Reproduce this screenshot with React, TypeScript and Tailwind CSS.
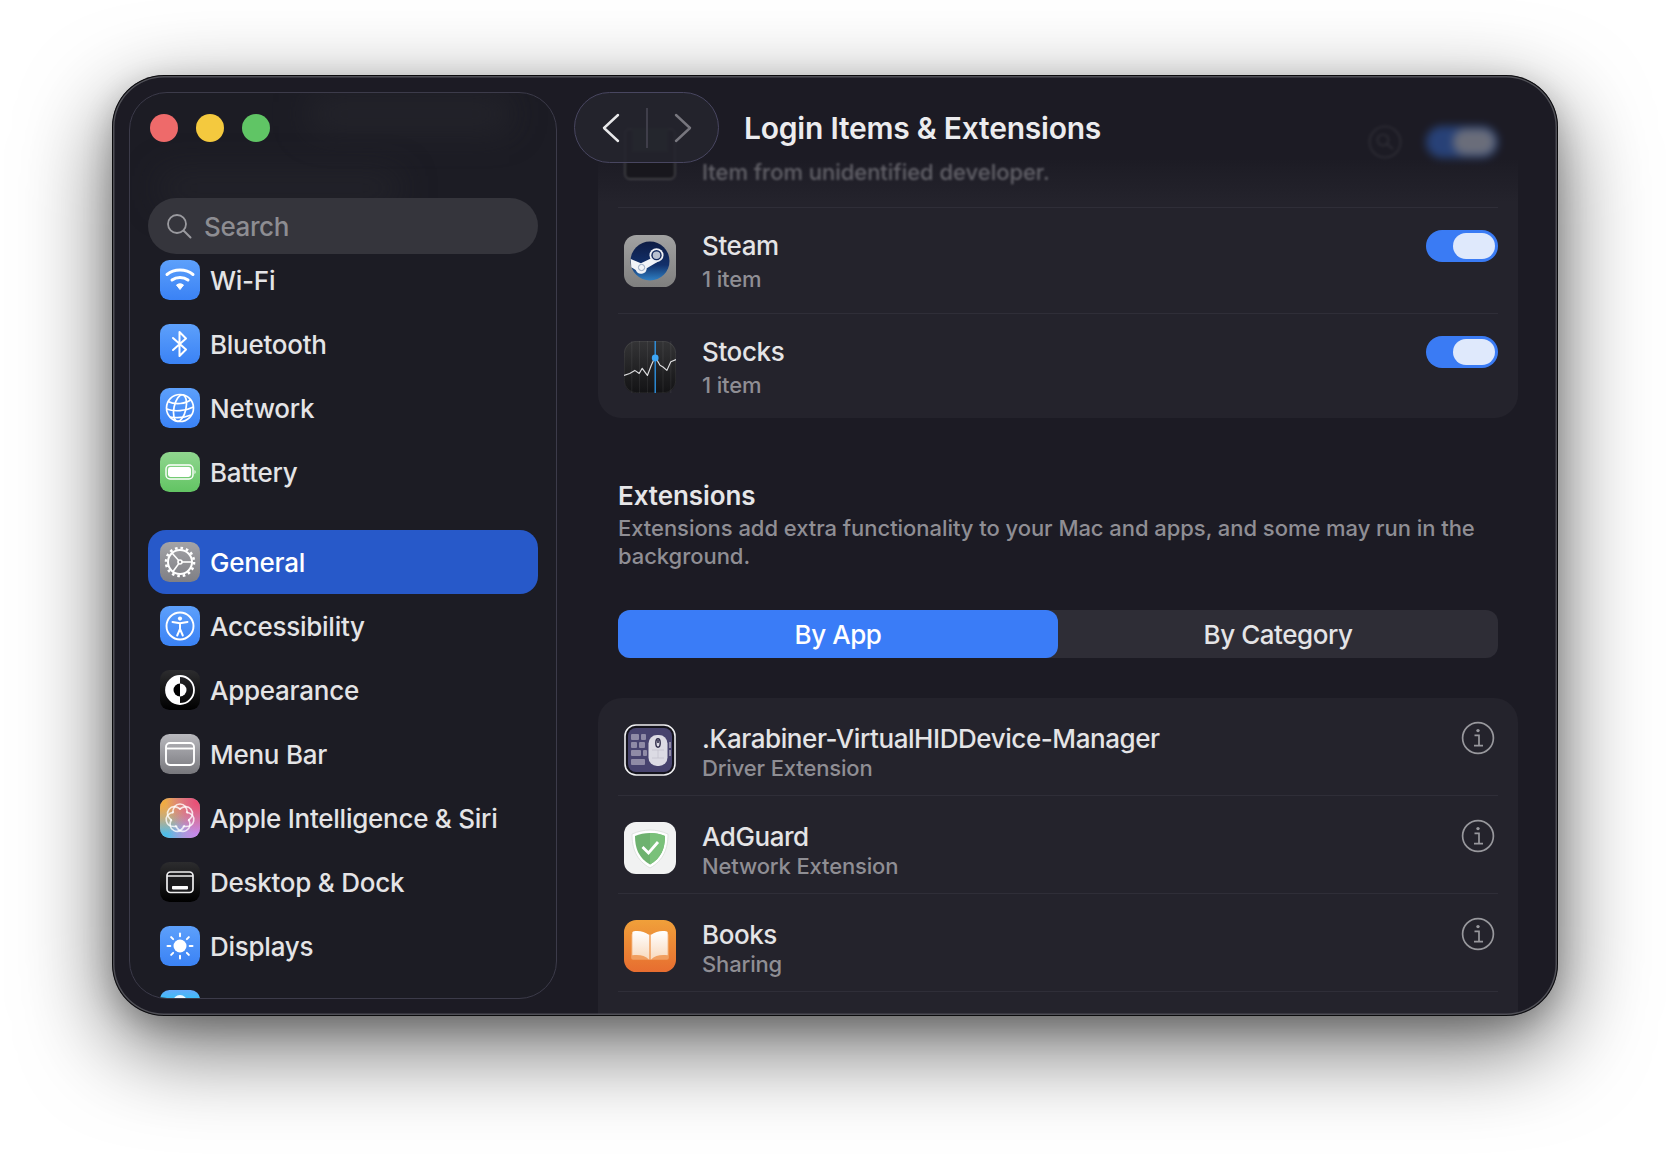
import React from "react";

const Tile = ({ id, from, to, children, size = 40, rx = 9.5 }: { id: string; from: string; to: string; children?: React.ReactNode; size?: number; rx?: number }) => (
  <svg width={size} height={size} viewBox="0 0 40 40" className="shrink-0 block">
    <defs>
      <linearGradient id={id} x1="0" y1="0" x2="0" y2="1">
        <stop offset="0" stopColor={from} />
        <stop offset="1" stopColor={to} />
      </linearGradient>
    </defs>
    <rect width="40" height="40" rx={rx} fill={`url(#${id})`} />
    {children}
  </svg>
);

const BLUE_A = "#5da0fb";
const BLUE_B = "#3a82f5";

const WifiIcon = () => (
  <Tile id="g-wifi" from={BLUE_A} to={BLUE_B}>
    <g fill="none" stroke="#fff" strokeWidth="3" strokeLinecap="round">
      <path d="M7 14.5 C14 8.5 26 8.5 33 14.5" />
      <path d="M12 20 C16.5 16.5 23.5 16.5 28 20" />
    </g>
    <path d="M16.5 25 C18.5 23.4 21.5 23.4 23.5 25 L20 29.5 Z" fill="#fff" stroke="#fff" strokeWidth="1" strokeLinejoin="round" />
  </Tile>
);
const BluetoothIcon = () => (
  <Tile id="g-bt" from={BLUE_A} to={BLUE_B}>
    <path d="M13 14 L26 25.5 L19.5 32 V8 L26 14.5 L13 26" fill="none" stroke="#fff" strokeWidth="2" strokeLinejoin="round" strokeLinecap="round" />
  </Tile>
);
const GlobeIcon = () => (
  <Tile id="g-net" from={BLUE_A} to={BLUE_B}>
    <g fill="none" stroke="#fff" strokeWidth="1.7">
      <circle cx="20" cy="20" r="13.5" />
      <ellipse cx="20" cy="20" rx="6" ry="13.5" transform="rotate(12 20 20)" />
      <path d="M8 13.5 C15 17 26 16 31 11.5" />
      <path d="M6.7 21 C14 24 26 23 33.4 19" />
      <path d="M10 29 C16 30 24 30 31 27" />
    </g>
  </Tile>
);
const BatteryIcon = () => (
  <Tile id="g-bat" from="#90d68f" to="#62c463">
    <rect x="6" y="13" width="27" height="14" rx="4" fill="none" stroke="#fff" strokeWidth="1.4" />
    <rect x="8" y="15" width="23" height="10" rx="2.4" fill="#fff" />
    <path d="M34.5 18 C36 18.6 36 21.4 34.5 22 Z" fill="#fff" />
  </Tile>
);
const GearIcon = () => (
  <Tile id="g-gen" from="#a3a3a7" to="#7f7f84">
    <g fill="none" stroke="#fff">
      <circle cx="20" cy="20" r="12" strokeWidth="2" />
      <circle cx="20" cy="20" r="14" strokeWidth="2.6" strokeDasharray="2.6 2.9" />
      <g strokeWidth="1.6">
        <circle cx="20" cy="20" r="2" />
        <path d="M22 20 H31" />
        <path d="M18.7 18.5 L12 11" />
        <path d="M18.8 21.6 L13 29.5" />
      </g>
    </g>
  </Tile>
);
const AccessIcon = () => (
  <Tile id="g-acc" from={BLUE_A} to={BLUE_B}>
    <circle cx="20" cy="20" r="13.5" fill="none" stroke="#fff" strokeWidth="1.9" />
    <circle cx="20" cy="12.6" r="2.1" fill="#fff" />
    <path d="M12.5 16 L20 17.3 L27.5 16 M20 17.3 V23 M20 23 L17.2 29.5 M20 23 L22.8 29.5" fill="none" stroke="#fff" strokeWidth="2" strokeLinecap="round" strokeLinejoin="round" />
  </Tile>
);
const AppearanceIcon = () => (
  <Tile id="g-app" from="#2c2c2e" to="#000">
    <circle cx="20" cy="20" r="14" fill="none" stroke="#fff" strokeWidth="1.8" />
    <path d="M20 6 A14 14 0 0 0 20 34 Z" fill="#fff" />
    <path d="M20 13.5 A6.5 6.5 0 0 0 20 26.5 Z" fill="#000" />
    <path d="M20 13.5 A6.5 6.5 0 0 1 20 26.5 Z" fill="#fff" />
  </Tile>
);
const MenuBarIcon = () => (
  <Tile id="g-menu" from="#b9b9be" to="#77777c">
    <rect x="6" y="9" width="28" height="22" rx="4" fill="none" stroke="#fff" strokeWidth="1.9" />
    <path d="M6 14.5 H34" stroke="#fff" strokeWidth="1.9" />
  </Tile>
);
const SiriIcon = () => (
  <svg width="40" height="40" viewBox="0 0 40 40" className="shrink-0 block">
    <defs>
      <radialGradient id="ai-o" cx="0.05" cy="0.1" r="0.8"><stop offset="0" stopColor="#f4ab3a" /><stop offset="1" stopColor="#f4ab3a" stopOpacity="0" /></radialGradient>
      <radialGradient id="ai-p" cx="0.95" cy="0.1" r="0.8"><stop offset="0" stopColor="#ee4a72" /><stop offset="1" stopColor="#ee4a72" stopOpacity="0" /></radialGradient>
      <radialGradient id="ai-b" cx="0.1" cy="1" r="0.8"><stop offset="0" stopColor="#40c0f0" /><stop offset="1" stopColor="#40c0f0" stopOpacity="0" /></radialGradient>
      <radialGradient id="ai-v" cx="1" cy="0.95" r="0.8"><stop offset="0" stopColor="#c784f5" /><stop offset="1" stopColor="#c784f5" stopOpacity="0" /></radialGradient>
    </defs>
    <rect width="40" height="40" rx="9.5" fill="#b9a5b0" />
    <rect width="40" height="40" rx="9.5" fill="url(#ai-b)" />
    <rect width="40" height="40" rx="9.5" fill="url(#ai-v)" />
    <rect width="40" height="40" rx="9.5" fill="url(#ai-o)" />
    <rect width="40" height="40" rx="9.5" fill="url(#ai-p)" />
    <g fill="none" stroke="#fff" strokeOpacity="0.78" strokeWidth="1.6">
      {[0, 51.4, 102.8, 154.2, 205.6, 257, 308.4].map((a) => (
        <path key={a} d="M12.6 15.5 C13 9.5 15.5 6 20 6 C24.5 6 27 9.5 27.4 15.5" transform={`rotate(${a} 20 20)`} />
      ))}
    </g>
  </svg>
);
const DesktopIcon = () => (
  <Tile id="g-desk" from="#2c2c2e" to="#000">
    <rect x="7" y="10" width="26" height="20.5" rx="3.5" fill="#1c1c1e" stroke="#f0f0f0" strokeWidth="1.7" />
    <path d="M7 14 H33" stroke="#f0f0f0" strokeWidth="1.4" />
    <rect x="12" y="24" width="16" height="3.4" rx="0.8" fill="#fff" />
  </Tile>
);
const DisplaysIcon = () => (
  <Tile id="g-disp" from={BLUE_A} to={BLUE_B}>
    <circle cx="20" cy="20" r="6.5" fill="#fff" />
    <g stroke="#fff" strokeWidth="2" strokeLinecap="round">
      {[0, 45, 90, 135, 180, 225, 270, 315].map((a) => (
        <path key={a} d="M20 7.5 V10.3" transform={`rotate(${a} 20 20)`} />
      ))}
    </g>
  </Tile>
);
const NextIcon = () => (
  <svg width="40" height="40" viewBox="0 0 40 40" className="shrink-0 block">
    <defs>
      <linearGradient id="g-next" x1="0" y1="0" x2="0" y2="1">
        <stop offset="0" stopColor="#62a8fb" />
        <stop offset="0.3" stopColor="#2fc6f5" />
      </linearGradient>
    </defs>
    <rect width="40" height="40" rx="9.5" fill="url(#g-next)" />
    <circle cx="20" cy="12" r="7" fill="#fff" fillOpacity="0.9" />
  </svg>
);

const SteamIcon = () => (
  <Tile id="g-steam" from="#a2a2a2" to="#7f7f7f" size={52} rx={9.5}>
    <defs>
      <linearGradient id="g-steam-c" x1="0" y1="0" x2="0" y2="1">
        <stop offset="0" stopColor="#0e1c44" />
        <stop offset="0.6" stopColor="#12306a" />
        <stop offset="1" stopColor="#2f80c4" />
      </linearGradient>
    </defs>
    <circle cx="20" cy="20" r="15" fill="url(#g-steam-c)" />
    <path d="M5.2 18.5 L13 21.8 L23 17 L26 20.5 L17.5 25.5 A4.4 4.4 0 0 1 9 27 L5.6 24.8 Z" fill="#f2f4f8" />
    <circle cx="25" cy="15.5" r="5.4" fill="#eef0f4" />
    <circle cx="25" cy="15.5" r="4" fill="#12285c" />
    <circle cx="25" cy="15.5" r="2.9" fill="#b9c1d0" />
    <circle cx="13.5" cy="25" r="2.4" fill="none" stroke="#8da0bc" strokeWidth="0.7" />
  </Tile>
);
const StocksIcon = () => (
  <Tile id="g-stocks" from="#343436" to="#131315" size={52} rx={9.5}>
    <rect x="0.2" y="0.2" width="39.6" height="39.6" rx="9.4" fill="none" stroke="#fff" strokeOpacity="0.15" strokeWidth="0.4" />
    <g stroke="#fff" strokeOpacity="0.16" strokeWidth="0.35">
      <path d="M6 0 V40 M12 0 V40 M18 0 V40 M30 0 V40 M36 0 V40" />
    </g>
    <path d="M0 26.5 L4.4 25 L8.3 22.6 L11.7 25 L14 21 L18 26.5 L21 18.7 L24 12.2 L27.7 18.7 L30 20 L33 22.6 L36 16 L40 14.3" fill="none" stroke="#dcdcde" strokeWidth="0.9" strokeLinejoin="round" />
    <path d="M24 0 V40" stroke="#2f9bf0" strokeWidth="1" />
    <circle cx="24" cy="13" r="2.6" fill="#3ea6f5" />
  </Tile>
);
const KarabinerIcon = () => (
  <svg width="52" height="52" viewBox="0 0 52 52" className="shrink-0 block">
    <rect x="1" y="1" width="50" height="50" rx="11" fill="#14131c" stroke="#eeeef0" strokeWidth="1.6" />
    <rect x="4" y="4" width="44" height="44" rx="8" fill="#47436e" />
    <g fill="#8f8ba6">
      <rect x="7" y="10" width="8" height="6" rx="1" /><rect x="17" y="10" width="5" height="6" rx="1" />
      <rect x="7" y="18" width="6" height="6" rx="1" /><rect x="15" y="18" width="6" height="6" rx="1" />
      <rect x="7" y="26" width="10" height="6" rx="1" /><rect x="19" y="26" width="4" height="6" rx="1" />
      <rect x="7" y="35" width="14" height="6" rx="1" /><rect x="45" y="18" width="2" height="6" /><rect x="45" y="26" width="2" height="6" />
    </g>
    <rect x="24.5" y="11" width="19" height="31" rx="8.5" fill="#dcdbe4" />
    <path d="M28 26 H40 M34 26 V34 M28 34 H40" stroke="#c3c2cd" strokeWidth="0.8" />
    <ellipse cx="34" cy="19" rx="2.2" ry="4.2" fill="none" stroke="#2d2a48" strokeWidth="1.4" />
    <path d="M34 16 V19" stroke="#2d2a48" strokeWidth="1.6" />
  </svg>
);
const AdGuardIcon = () => (
  <svg width="52" height="52" viewBox="0 0 52 52" className="shrink-0 block">
    <rect width="52" height="52" rx="12" fill="#f1f2f2" />
    <path d="M26 8 C32 8 38 9.5 44 12 C44 26 40 38 26 46 C12 38 8 26 8 12 C14 9.5 20 8 26 8 Z" fill="#ffffff" stroke="#d9dedb" strokeWidth="0.8" />
    <path d="M26 11 C31.5 11 36.5 12.2 41 14 C41 27 37 36 26 42.5 C15 36 11 27 11 14 C15.5 12.2 20.5 11 26 11 Z" fill="#6eb26f" />
    <path d="M26 11 C31.5 11 36.5 12.2 41 14 C41 27 37 36 26 42.5 Z" fill="#7ac17a" />
    <path d="M18.5 25 L24.5 31 L34 20" fill="none" stroke="#fff" strokeWidth="2.8" />
  </svg>
);
const BooksIcon = () => (
  <Tile id="g-books" from="#f0a03a" to="#e76d30" size={52} rx={9.5}>
    <defs>
      <linearGradient id="g-page" x1="0" y1="0" x2="0" y2="1">
        <stop offset="0" stopColor="#ffffff" />
        <stop offset="1" stopColor="#f8d9bd" />
      </linearGradient>
    </defs>
    <path d="M5.5 11 V29 A1.5 1.5 0 0 0 7 30.5 H33 A1.5 1.5 0 0 0 34.5 29 V11 Z" fill="#f3ae74" fillOpacity="0.7" />
    <path d="M19.4 11.5 C15.5 8.6 11 8 7 8.8 A1 1 0 0 0 6.4 9.8 V27.2 C11 26.4 16 27 19.4 30.5 Z" fill="url(#g-page)" />
    <path d="M20.6 11.5 C24.5 8.6 29 8 33 8.8 A1 1 0 0 1 33.6 9.8 V27.2 C29 26.4 24 27 20.6 30.5 Z" fill="url(#g-page)" />
  </Tile>
);

const BlurredIcon = () => (
  <svg width="52" height="52" viewBox="0 0 52 52" className="shrink-0 block">
    <rect x="1" y="1" width="50" height="50" rx="5" fill="#17161b" stroke="#48484c" strokeWidth="1.8" />
    <rect x="8" y="0" width="36" height="24" fill="#28352c" />
  </svg>
);

const ChevronLeft = ({ color }: { color: string }) => (
  <svg width="18" height="30" viewBox="0 0 18 30" className="block">
    <path d="M16 2 L2 15 L16 28" fill="none" stroke={color} strokeWidth="2.4" strokeLinecap="round" strokeLinejoin="round" />
  </svg>
);
const ChevronRight = ({ color }: { color: string }) => (
  <svg width="18" height="30" viewBox="0 0 18 30" className="block">
    <path d="M2 2 L16 15 L2 28" fill="none" stroke={color} strokeWidth="2.4" strokeLinecap="round" strokeLinejoin="round" />
  </svg>
);

const InfoIcon = () => (
  <svg width="34" height="34" viewBox="0 0 34 34" className="block">
    <circle cx="17" cy="17" r="15.4" fill="none" stroke="#98989d" strokeWidth="1.7" />
    <circle cx="17" cy="9.6" r="1.7" fill="#98989d" />
    <path d="M13.5 14.4 H18 V24.6 M13 24.6 H22" fill="none" stroke="#98989d" strokeWidth="1.7" />
  </svg>
);

const Toggle = () => (
  <div className="w-[72px] h-[32px] rounded-full bg-[#3a7bf4] flex items-center justify-end pr-[3px] shrink-0">
    <div className="w-[42px] h-[26px] rounded-full bg-[#dfe9fc]" />
  </div>
);

type Item = { name: string; icon: React.ReactNode; selected?: boolean };

const groupA: Item[] = [
  { name: "Wi-Fi", icon: <WifiIcon /> },
  { name: "Bluetooth", icon: <BluetoothIcon /> },
  { name: "Network", icon: <GlobeIcon /> },
  { name: "Battery", icon: <BatteryIcon /> },
];
const groupB: Item[] = [
  { name: "General", icon: <GearIcon />, selected: true },
  { name: "Accessibility", icon: <AccessIcon /> },
  { name: "Appearance", icon: <AppearanceIcon /> },
  { name: "Menu Bar", icon: <MenuBarIcon /> },
  { name: "Apple Intelligence & Siri", icon: <SiriIcon /> },
  { name: "Desktop & Dock", icon: <DesktopIcon /> },
  { name: "Displays", icon: <DisplaysIcon /> },
  { name: "", icon: <NextIcon /> },
];

const SideRow = ({ item }: { item: Item }) => (
  <div className={`h-[64px] px-[12px] flex items-center gap-[10px] rounded-[18px] ${item.selected ? "bg-[#2759c9] text-white" : "text-[#e4e4e6]"}`}>
    {item.icon}
    <span className="text-[26px] leading-[32px] tracking-[-0.26px] font-[450] pt-[1px]">{item.name}</span>
  </div>
);

const LoginRow = ({ name, sub, icon }: { name: string; sub: string; icon: React.ReactNode }) => (
  <div className="h-[106.5px] border-b-[1.5px] border-[#2f2e38] flex items-start last:border-b-0">
    <div className="pl-[6px] pt-[27px] pr-[26px]">{icon}</div>
    <div className="flex-1 pt-[22px]">
      <div className="text-[26px] leading-[32px] text-[#e4e4e6] tracking-[-0.4px] font-[450]">{name}</div>
      <div className="text-[22px] leading-[28px] mt-[3px] text-[#8f8e94] tracking-[-0.15px] font-[450]">{sub}</div>
    </div>
    <div className="pt-[22px]"><Toggle /></div>
  </div>
);

const ExtRow = ({ name, sub, icon }: { name: string; sub: string; icon: React.ReactNode }) => (
  <div className="h-[98px] border-b-[1.5px] border-[#2f2e38] flex items-start">
    <div className="pl-[6px] pt-[26px] pr-[26px]">{icon}</div>
    <div className="flex-1 pt-[25px]">
      <div className="text-[26px] leading-[32px] text-[#e4e4e6] tracking-[-0.43px] font-[450]">{name}</div>
      <div className="text-[22px] leading-[28px] -mt-[1px] text-[#8f8e94] tracking-[-0.15px] font-[450]">{sub}</div>
    </div>
    <div className="pt-[23px] pr-[3px]"><InfoIcon /></div>
  </div>
);

export default function App() {
  return (
    <div className="h-[1164px] w-[1670px] bg-white overflow-hidden pl-[112px] pt-[75px] font-['Inter','Liberation_Sans',sans-serif]">
      <div className="relative w-[1446px] h-[941px] rounded-[52px] bg-[#1c1b24] flex overflow-hidden p-[17px] shadow-[0_30px_90px_rgba(0,0,0,0.6),0_10px_30px_rgba(0,0,0,0.2)]">
        <aside className="relative w-[428px] rounded-[38px] border-[1.5px] border-[#3c3b4a] bg-[#1c1c24] overflow-hidden px-[18px] pt-[105px] shrink-0">
          <div className="absolute left-[30px] top-[80px] w-[240px] h-[30px] bg-[#2c2c32] blur-[18px] opacity-50" />
          <div className="absolute left-[180px] top-[6px] w-[200px] h-[30px] bg-[#2c2c32] blur-[18px] opacity-60" />
          <div className="relative h-[56px] rounded-full bg-[#35353c] flex items-center pl-[18px] gap-[12px] text-[#8d8d92]">
            <svg width="26" height="26" viewBox="0 0 26 26" className="block">
              <circle cx="11" cy="11" r="9" fill="none" stroke="#9a9a9f" strokeWidth="1.8" />
              <path d="M17.5 17.5 L24.5 24.5" stroke="#9a9a9f" strokeWidth="2" strokeLinecap="round" />
            </svg>
            <span className="text-[26px] leading-[32px] tracking-[-0.4px] font-[450] pt-[1px]">Search</span>
          </div>
          <div className="relative -mt-[6px]">
            {groupA.map((i) => <SideRow key={i.name} item={i} />)}
            <div className="h-[26px]" />
            {groupB.map((i) => <SideRow key={i.name || "next"} item={i} />)}
          </div>
        </aside>

        <main className="flex-1 -mt-[17px] pl-[41px] pr-[23px] pt-[26px]">
          <section className="h-[317px] rounded-[24px] px-[20px] bg-[linear-gradient(to_bottom,#1c1b24_18%,#24232c_32%)]">
            <div className="h-[106.5px] border-b-[1.5px] border-[#2f2e38] flex items-start">
              <div className="pl-[6px] pt-[27px] pr-[26px] blur-[1px] opacity-80"><BlurredIcon /></div>
              <div className="flex-1 pt-[22px]">
                <div className="h-[32px]" />
                <div className="text-[22px] leading-[28px] mt-[3px] text-[#8f8e94] tracking-[-0.03px] font-[450] blur-[1px] opacity-60">Item from unidentified developer.</div>
              </div>
              <div className="pt-[24px] pr-[24px] blur-[1.5px] opacity-15">
                <svg width="34" height="34" viewBox="0 0 34 34" className="block">
                  <circle cx="17" cy="17" r="15.5" fill="none" stroke="#98989d" strokeWidth="1.7" />
                  <circle cx="15" cy="15" r="5.5" fill="none" stroke="#98989d" strokeWidth="1.7" />
                  <path d="M19 19 L25 24" stroke="#98989d" strokeWidth="1.7" />
                </svg>
              </div>
              <div className="pt-[25px] blur-[4px] opacity-40"><Toggle /></div>
            </div>
            <LoginRow name="Steam" sub="1 item" icon={<SteamIcon />} />
            <LoginRow name="Stocks" sub="1 item" icon={<StocksIcon />} />
          </section>

          <section className="px-[20px]">
            <h2 className="mt-[62px] text-[26px] leading-[32px] font-semibold text-[#e6e6e8] tracking-[-0.08px]">Extensions</h2>
            <p className="mt-[2px] text-[22px] leading-[28px] text-[#8f8e94] tracking-[-0.05px] font-[450]">
              Extensions add extra functionality to your Mac and apps, and some may run in the background.
            </p>
            <div className="mt-[40px] h-[48px] rounded-[12px] bg-[#2e2d36] flex text-[26px] tracking-[-0.45px] font-[450]">
              <div className="w-1/2 rounded-[12px] bg-[#3a7cf7] text-white flex items-center justify-center">By App</div>
              <div className="w-1/2 text-[#e4e4e6] flex items-center justify-center">By Category</div>
            </div>
          </section>

          <section className="mt-[40px] rounded-t-[24px] px-[20px] bg-[#24232c] h-[330px]">
            <ExtRow name=".Karabiner-VirtualHIDDevice-Manager" sub="Driver Extension" icon={<KarabinerIcon />} />
            <ExtRow name="AdGuard" sub="Network Extension" icon={<AdGuardIcon />} />
            <ExtRow name="Books" sub="Sharing" icon={<BooksIcon />} />
          </section>
        </main>

        <div className="absolute left-[38px] top-[39px] flex gap-[18px]">
          <div className="w-[28px] h-[28px] rounded-full bg-[#ee6a6a]" />
          <div className="w-[28px] h-[28px] rounded-full bg-[#f4c93e]" />
          <div className="w-[28px] h-[28px] rounded-full bg-[#60c565]" />
        </div>

        <div className="absolute left-[462px] top-[17px] flex items-center gap-[25px]">
          <div className="w-[145px] h-[71px] rounded-full bg-[#25242e]/85 border-[1.5px] border-[#484660] flex items-center">
            <div className="w-[71px] flex justify-center pl-[1px]"><ChevronLeft color="#e8e8ea" /></div>
            <div className="w-[2px] h-[40px] bg-[#3f3e4a]" />
            <div className="flex-1 flex justify-center pr-[1px]"><ChevronRight color="#77767e" /></div>
          </div>
          <h1 className="text-[30px] leading-[36px] font-semibold text-[#ececee] tracking-[-0.23px]">Login Items &amp; Extensions</h1>
        </div>

        <div className="absolute inset-0 rounded-[52px] shadow-[inset_0_0_0_1px_#0a0a0c,inset_0_0_0_2.5px_#4f4f56] pointer-events-none" />
      </div>
    </div>
  );
}
